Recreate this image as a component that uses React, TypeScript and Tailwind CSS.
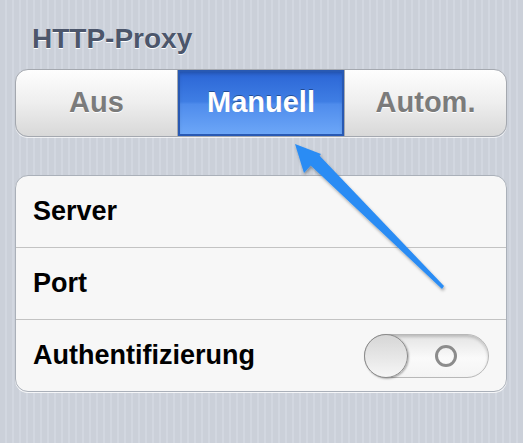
import { useState } from "react";

const segments = ["Aus", "Manuell", "Autom."];

const rows = ["Server", "Port"];

const Toggle = ({ on }: { on: boolean }) => (
  <div className="relative w-[125px] h-[44px] rounded-full border border-[#b8b8b8] bg-[linear-gradient(#e4e4e4,#fafafa_55%,#f4f4f4)] shadow-[inset_0_2px_3px_rgba(0,0,0,0.18)]">
    {/* off indicator */}
    <div className="absolute left-[70px] top-[10px] w-[22px] h-[22px] rounded-full border-[3px] border-[#8c8c8c]" />
    {/* knob */}
    <div
      className={`absolute top-[-1px] w-[44px] h-[44px] rounded-full border border-[#8a8a8a] bg-[linear-gradient(#d6d6d6,#f6f6f6)] shadow-[1px_1px_2px_rgba(0,0,0,0.3)] ${
        on ? "right-[-1px]" : "left-[-1px]"
      }`}
    />
  </div>
);

export default function App() {
  const [mode, setMode] = useState(1);
  const [auth, setAuth] = useState(false);

  return (
    <div className="relative w-[523px] h-[443px] overflow-hidden bg-[#cdd2db] bg-[repeating-linear-gradient(90deg,#cbd0d9_0px,#cbd0d9_5px,#d2d7e0_5px,#d2d7e0_7px)] font-['Liberation_Sans',Arial,sans-serif]">
      <div className="px-[15px] pt-[24px]">
        {/* Section header */}
        <h2 className="pl-[17px] text-[28px] leading-[30px] font-bold text-[#4c566b] [text-shadow:0_1px_0_#ffffff]">
          HTTP-Proxy
        </h2>

        {/* Segmented control */}
        <div className="mt-[15px] flex h-[68px] w-[492px] rounded-[13px] border border-[#a4a8af] bg-[linear-gradient(#fefefe,#eeeeee_50%,#d8d8d8)] overflow-hidden shadow-[0_1px_0_rgba(255,255,255,0.7)]">
          {segments.map((label, i) => {
            const active = i === mode;
            return (
              <button
                key={label}
                onClick={() => setMode(i)}
                className={`flex-1 flex items-center justify-center text-[29px] font-bold ${
                  active
                    ? "text-white bg-[linear-gradient(#2a64d4,#3f7ee4_48%,#4f8cec_52%,#6ea8f8)] shadow-[inset_0_0_0_2px_#2859b3,inset_0_3px_4px_rgba(0,0,0,0.25)] [text-shadow:0_-1px_0_rgba(0,0,0,0.35)]"
                    : "text-[#7b7b7b] [text-shadow:0_1px_0_#ffffff]"
                } ${i === 1 ? "min-w-[166px] max-w-[166px]" : ""} ${i === 0 ? "border-r border-[#a4a8af]" : ""} ${
                  i === 2 ? "border-l border-[#a4a8af]" : ""
                }`}
              >
                {label}
              </button>
            );
          })}
        </div>

        {/* Settings group */}
        <div className="mt-[38px] w-[492px] rounded-[13px] border border-[#aab0b9] bg-[#f7f7f7] shadow-[0_1px_0_rgba(255,255,255,0.8)]">
          {rows.map((row) => (
            <div
              key={row}
              className="h-[72px] flex items-center pl-[17px] border-b border-[#c3c3c3] text-[27px] font-bold text-black"
            >
              {row}
            </div>
          ))}
          <div className="h-[71px] flex items-center justify-between pl-[17px] pr-[17px] text-[27px] font-bold text-black">
            <span>Authentifizierung</span>
            <button onClick={() => setAuth(!auth)}>
              <Toggle on={auth} />
            </button>
          </div>
        </div>
      </div>

      {/* Annotation arrow */}
      <svg className="absolute inset-0 pointer-events-none" width="523" height="443" viewBox="0 0 523 443">
        <defs>
          <filter id="sh" x="-20%" y="-20%" width="140%" height="140%">
            <feDropShadow dx="1" dy="2" stdDeviation="1.5" floodColor="#000" floodOpacity="0.35" />
          </filter>
        </defs>
        <g filter="url(#sh)" fill="#2a8cf4">
          <polygon points="307,162 317,153 444,286 442,289" />
          <polygon points="295,144 321,154 304,173" />
        </g>
      </svg>
    </div>
  );
}
